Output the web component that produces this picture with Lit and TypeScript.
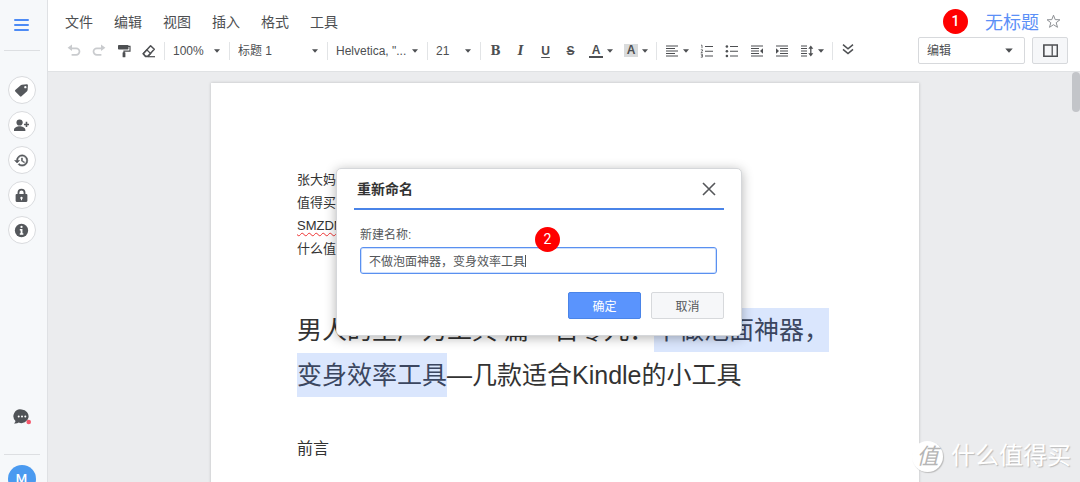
import { LitElement, html, css, svg } from "lit";
import { customElement, state } from "lit/decorators.js";

const icons = {
  undo: svg`<path d="M5 0.6V7L0.6 3.8z" fill="currentColor"/><path d="M4 3.9h5.2a3.2 3.2 0 0 1 0 6.6H4.6" transform="translate(0 .4)" fill="none" stroke="currentColor" stroke-width="1.7"/>`,
  redo: svg`<g transform="matrix(-1 0 0 1 14 0)"><path d="M5 0.6V7L0.6 3.8z" fill="currentColor"/><path d="M4 3.9h5.2a3.2 3.2 0 0 1 0 6.6H4.6" transform="translate(0 .4)" fill="none" stroke="currentColor" stroke-width="1.7"/></g>`,
  roller: svg`<rect x="1" y="1" width="10.5" height="4.6" rx=".8" fill="currentColor"/><path d="M11 2.4h2v4.8H7v2" fill="none" stroke="currentColor" stroke-width="1.2"/><rect x="5.6" y="8.2" width="2.8" height="5" rx=".5" fill="currentColor"/>`,
  eraser: svg`<path d="M8.6 1.7 12.3 5.2 5.8 12.2H3.6L1.2 9.8z" fill="none" stroke="currentColor" stroke-width="1.5" stroke-linejoin="round"/><path d="M4.7 5.8 8.7 9.6l-2.9 3H3.5L1.2 9.8z" fill="none" stroke="currentColor" stroke-width="1.2"/><path d="M6 12.7h7" stroke="currentColor" stroke-width="1.2"/>`,
  align: svg`<path d="M1 2h12M1 4.5h9M1 7h12M1 9.5h9M1 12h12" stroke="currentColor" stroke-width="1.1"/>`,
  ordered: svg`<path d="M5 2.5h8M5 7.2h8M5 12h8" stroke="currentColor" stroke-width="1.1"/><path d="M1 1.2h1v3M.8 5.8h1.7v1.2L.9 8.6h1.8M.8 10.2h1.6v3H.8M1.2 11.7h1.2" fill="none" stroke="currentColor" stroke-width=".8"/>`,
  bullets: svg`<path d="M5 2.5h8M5 7.2h8M5 12h8" stroke="currentColor" stroke-width="1.1"/><g fill="currentColor"><circle cx="1.9" cy="2.5" r="1.3"/><circle cx="1.9" cy="7.2" r="1.3"/><circle cx="1.9" cy="12" r="1.3"/></g>`,
  outdent: svg`<path d="M1 2h12M1 4.5h8M1 7h8M1 9.5h8M1 12h12" stroke="currentColor" stroke-width="1.2"/><path d="M13 4.2v5.6L10 7z" fill="currentColor"/>`,
  indent: svg`<path d="M1 2h12M5 4.5h8M5 7h8M5 9.5h8M1 12h12" stroke="currentColor" stroke-width="1.2"/><path d="M1 4.2v5.6L4 7z" fill="currentColor"/>`,
  spacing: svg`<path d="M1 2h6M1 4.5h6M1 7h6M1 9.5h6M1 12h6" stroke="currentColor" stroke-width="1.2"/><path d="M10.8 3v8" stroke="currentColor" stroke-width="1.3"/><path d="M8.3 4.7 10.8 1.5 13.3 4.7zM8.3 9.3 10.8 12.5 13.3 9.3z" fill="currentColor"/>`,
  more: svg`<path d="M2 .6 7 4.800l5-4.200M2 5.400 7 9.600l5-4.200" fill="none" stroke="currentColor" stroke-width="1.500"/>`,
  panel: svg`<path d="M.8 1.8h12.6v10.6H.8z" fill="none" stroke="currentColor" stroke-width="1.5"/><path d="M8.6 2v10" stroke="currentColor" stroke-width="1.2"/>`,
  tag: svg`<path fill-rule="evenodd" d="M7.3 1.6 12 1.2a1 1 0 0 1 1 1L12.7 6.6a1.5 1.5 0 0 1-.5 1L7 12.4a1 1 0 0 1-1.4 0L1.2 8a1 1 0 0 1 0-1.4L6.3 2a1.5 1.5 0 0 1 1-.4zM10.6 2.8a1.1 1.1 0 1 0 0 2.2 1.1 1.1 0 0 0 0-2.2z" fill="currentColor"/>`,
  person: svg`<circle cx="5.2" cy="4.2" r="2.9" fill="currentColor"/><path d="M0 12.2V11c0-2 3-3.2 5.2-3.2s5.4 1.2 5.4 3.2v1.2zM10.9 3.6h1.5v1.7H14v1.5h-1.6v1.7h-1.5V6.8H9.3V5.3h1.6z" fill="currentColor"/>`,
  history: svg`<path transform="scale(.5833)" fill="currentColor" stroke="currentColor" stroke-width=".9" d="M13 3a9 9 0 0 0-9 9H1l3.89 3.89.07.14L9 12H6c0-3.87 3.13-7 7-7s7 3.13 7 7-3.13 7-7 7c-1.93 0-3.68-.79-4.94-2.06l-1.42 1.42A8.95 8.95 0 0 0 13 21a9 9 0 0 0 0-18zm-1 5v5l4.28 2.54.72-1.21-3.5-2.08V8H12z"/>`,
  lock: svg`<path fill-rule="evenodd" d="M3.3 5.6V4.4a3.7 3.7 0 0 1 7.4 0v1.2h.8a1 1 0 0 1 1 1v5.4a1 1 0 0 1-1 1h-9a1 1 0 0 1-1-1V6.6a1 1 0 0 1 1-1zm1.7 0h4V4.4a2 2 0 0 0-4 0zm2 2.6a1.1 1.1 0 0 0-.5 2.1v1.2h1v-1.2A1.1 1.1 0 0 0 7 8.2z" fill="currentColor"/>`,
  info: svg`<circle cx="7" cy="7" r="6.2" fill="currentColor"/><circle cx="7" cy="3.7" r="1.05" fill="#fff"/><path d="M5.4 5.6h2.5v4h.8v1.3H5.4V9.6h.8V6.9h-.8z" fill="#fff"/>`,
};

const icon = (name: keyof typeof icons) =>
  html`<svg class="icon" viewBox="0 0 14 14" aria-hidden="true">${icons[name]}</svg>`;
const arrow = html`<svg class="arrow" viewBox="0 0 6 4" aria-hidden="true"><path d="M0 .3h6L3 3.7z" fill="currentColor"/></svg>`;

const shared = css`
  * { box-sizing: border-box; }
  button, select, input { font: inherit; color: inherit; margin: 0; }
  button { border: 0; padding: 0; background: none; cursor: pointer; }
  .icon { width: 14px; height: 14px; display: block; flex: none; }
  .arrow { width: 6px; height: 4px; display: block; flex: none; }
`;

@customElement("side-rail")
class SideRail extends LitElement {
  static styles = [shared, css`
    :host {
      display: flex; flex-direction: column; align-items: center;
      width: 48px; padding-right: 4px; background: #f6f8fa;
      border-right: 1px solid #dfe1e4; color: #55585c;
    }
    .menu { height: 50px; width: 100%; display: grid; place-items: center; color: #4d8bf5; }
    .menu svg { width: 15px; height: 12px; }
    .rule { width: 36px; height: 1px; background: #dddfe2; flex: none; }
    .tools { display: flex; flex-direction: column; gap: 7px; margin-top: 25px; }
    .round {
      width: 28px; height: 28px; border-radius: 50%; border: 1px solid #d9dbde;
      background: #fff; display: grid; place-items: center;
    }
    .round .icon { width: 15px; height: 15px; }
    .chat { margin-top: auto; margin-bottom: 28px; display: block; }
    .chat svg { display: block; width: 18px; height: 18px; }
    .account { height: 27px; padding-top: 10px; overflow: hidden; flex: none; }
    .avatar {
      width: 28px; height: 28px; border-radius: 50%; background: #4a9af0; color: #fff;
      font-size: 13px; font-weight: 500; line-height: 28px; font-family: "Roboto", sans-serif;
    }
  `];
  render() {
    const tools: [keyof typeof icons, string][] = [
      ["tag", "标签"], ["person", "共享"], ["history", "历史"], ["lock", "权限"], ["info", "信息"],
    ];
    return html`
      <button class="menu" aria-label="菜单">
        <svg viewBox="0 0 15 12"><path d="M1 1h13M1 6h13M1 11h13" stroke="currentColor" stroke-width="2" stroke-linecap="round"/></svg>
      </button>
      <div class="rule"></div>
      <div class="tools">
        ${tools.map(([n, label]) => html`<button class="round" aria-label=${label}>${icon(n)}</button>`)}
      </div>
      <button class="chat" aria-label="评论">
        <svg viewBox="0 0 18 18">
          <path d="M8.7 1.5a7.2 6.8 0 1 1-3 13.1C4.5 15.4 2.8 15.7 1 15.4c.9-.6 1.4-1.4 1.5-2.4A6.8 6.8 0 0 1 8.7 1.5z" fill="#505357"/>
          <g fill="#fff"><circle cx="5.7" cy="8.4" r="1"/><circle cx="9" cy="8.4" r="1"/><circle cx="12.3" cy="8.4" r="1"/></g>
          <circle cx="15.7" cy="14" r="2.3" fill="#f5566a"/>
        </svg>
      </button>
      <div class="rule"></div>
      <div class="account"><button class="avatar">M</button></div>
    `;
  }
}

@customElement("editor-header")
class EditorHeader extends LitElement {
  static styles = [shared, css`
    :host {
      display: flex; justify-content: space-between; background: #fff;
      padding: 8px 12px 7px 13px; color: #4d4f52; font-size: 12px;
    }
    .left, .right { display: flex; flex-direction: column; gap: 3px; }
    .menus { display: flex; gap: 21px; height: 26px; align-items: center; padding-left: 4px; font-size: 14px; }
    .bar { display: flex; height: 27px; align-items: center; }
    .tool { width: 25px; height: 26px; display: grid; place-items: center; }
    .tool:disabled { color: #c9cbce; }
    .split { height: 26px; padding: 0 5px 0 6px; display: flex; gap: 4px; align-items: center; }
    .sep { width: 1px; height: 18px; margin: 0 2px 0 3px; background: #e2e4e6; }
    .pick { display: flex; align-items: center; position: relative; height: 26px; }
    .pick select {
      appearance: none; border: 0; background: none; width: 100%; height: 100%;
      padding: 0 14px 0 6px; outline: 0;
    }
    .pick .arrow { position: absolute; right: 6px; pointer-events: none; }
    .zoom { width: 59px; }
    .style { width: 92px; }
    .face { width: 94px; }
    .size { width: 47px; }
    .slab { font: bold 12px/14px "DejaVu Serif", serif; }
    .italic { font-style: italic; }
    .grotesk { font: bold 12px/14px "Liberation Sans", sans-serif; }
    .under { text-decoration: underline; text-underline-offset: 2px; }
    .strike { text-decoration: line-through; }
    .ink { width: 14px; border-bottom: 2px solid #4d4f52; text-align: center; line-height: 12px; }
    .fill { width: 14px; height: 13px; background: #d9dbdc; text-align: center; line-height: 13px; }
    .title { display: flex; height: 26px; align-items: center; justify-content: flex-end; gap: 7px; padding-right: 7px; }
    .badge {
      width: 25px; height: 25px; border-radius: 50%; background: #f00; color: #fff; margin-right: 10px;
      font: 500 14px/25px "Roboto", sans-serif; text-align: center;
    }
    .name { font-size: 18px; color: #5b90f7; text-decoration: none; }
    .star svg { width: 15px; height: 15px; display: block; }
    .modes { display: flex; gap: 7px; }
    .mode { width: 107px; height: 27px; border: 1px solid #d7d9dc; border-radius: 2px; }
    .mode select { padding-left: 8px; }
    .mode .arrow { right: 11px; width: 8px; height: 5px; }
    .side { width: 36px; height: 27px; border: 1px solid #d7d9dc; border-radius: 2px; background: #f6f7f9; display: grid; place-items: center; }
    .side .icon { width: 15px; height: 15px; }
  `];
  private pick(cls: string, label: string, value: string) {
    return html`<span class="pick ${cls}"><select aria-label=${label}><option>${value}</option></select>${arrow}</span>`;
  }
  private tool(name: keyof typeof icons, label: string, off = false) {
    return html`<button class="tool" aria-label=${label} ?disabled=${off}>${icon(name)}</button>`;
  }
  render() {
    const sep = html`<span class="sep"></span>`;
    return html`
      <div class="left">
        <nav class="menus">${["文件", "编辑", "视图", "插入", "格式", "工具"].map((m) => html`<button>${m}</button>`)}</nav>
        <div class="bar" role="toolbar">
          ${this.tool("undo", "撤销", true)}${this.tool("redo", "重做", true)}
          ${this.tool("roller", "格式刷")}${this.tool("eraser", "清除格式")}
          ${sep}${this.pick("zoom", "缩放", "100%")}
          ${sep}${this.pick("style", "样式", "标题 1")}
          ${sep}${this.pick("face", "字体", 'Helvetica, "...')}
          ${sep}${this.pick("size", "字号", "21")}
          ${sep}
          <button class="tool"><span class="slab">B</span></button>
          <button class="tool"><span class="slab italic">I</span></button>
          <button class="tool"><span class="grotesk under">U</span></button>
          <button class="tool"><span class="grotesk strike">S</span></button>
          <button class="split"><span class="grotesk ink">A</span>${arrow}</button>
          <button class="split"><span class="grotesk fill">A</span>${arrow}</button>
          ${sep}
          <button class="split" aria-label="对齐">${icon("align")}${arrow}</button>
          ${this.tool("ordered", "编号")}${this.tool("bullets", "项目符号")}
          ${this.tool("outdent", "减少缩进")}${this.tool("indent", "增加缩进")}
          <button class="split" aria-label="行距">${icon("spacing")}${arrow}</button>
          ${sep}${this.tool("more", "更多")}
        </div>
      </div>
      <div class="right">
        <div class="title">
          <span class="badge">1</span>
          <a class="name" href="#">无标题</a>
          <button class="star" aria-label="收藏">
            <svg viewBox="0 0 15 15"><path d="M7.5 1.2l1.7 4.4 4.7.2-3.7 2.9 1.3 4.6-4-2.6-4 2.6 1.3-4.6L1.1 5.8l4.7-.2z" fill="none" stroke="#8d9094"/></svg>
          </button>
        </div>
        <div class="modes">
          ${this.pick("mode", "模式", "编辑")}
          <button class="side" aria-label="侧栏">${icon("panel")}</button>
        </div>
      </div>
    `;
  }
}

@customElement("rename-dialog")
class RenameDialog extends LitElement {
  @state() private value = "不做泡面神器，变身效率工具";
  static styles = [shared, css`
    :host {
      position: absolute; inset: 0; padding: 168px 2px 0 0;
      display: flex; justify-content: center; align-items: flex-start;
    }
    .dialog {
      width: 406px; padding: 0 17px 16px; background: #fff; border: 1px solid #d5d7da;
      border-radius: 5px; box-shadow: 0 2px 12px rgba(0, 0, 0, 0.3); color: #55575a; font-size: 12px;
    }
    .head {
      display: flex; justify-content: space-between; align-items: center; height: 41px;
      padding: 0 8px 0 3px; border-bottom: 2px solid #4a84e8;
    }
    .head h2 { margin: 0; font-size: 14px; line-height: 20px; color: #333; }
    .form { padding: 16px 7px 0 6px; }
    .form label { display: block; line-height: 18px; margin-bottom: 3px; }
    .field { position: relative; }
    .field input {
      display: block; width: 100%; height: 27px; padding: 0 8px; outline: 0;
      border: 1px solid #5a90f0; border-radius: 3px; box-shadow: inset 0 0 0 1px #cfe0fc;
    }
    .caret { position: absolute; left: 165px; top: 8px; width: 1px; height: 12px; background: #555; }
    .badge {
      position: absolute; left: 175px; top: -20px; width: 25px; height: 25px; border-radius: 50%;
      background: #f00; color: #fff; font: 14px/25px "Roboto", sans-serif; text-align: center;
    }
    .actions { display: flex; justify-content: flex-end; gap: 10px; margin-top: 18px; }
    .actions button { width: 73px; height: 27px; border: 1px solid #d7d9dc; border-radius: 2px; background: #f6f7f9; }
    .actions .ok { background: #5a94fd; border-color: #4a84e8; color: #fff; }
  `];
  render() {
    return html`
      <div class="dialog" role="dialog" aria-labelledby="t">
        <div class="head">
          <h2 id="t">重新命名</h2>
          <button aria-label="关闭"><svg class="icon" viewBox="0 0 14 14"><path d="M1 1l12 12M13 1 1 13" stroke="#55575a" stroke-width="1.6"/></svg></button>
        </div>
        <div class="form">
          <label for="name">新建名称:</label>
          <div class="field">
            <input id="name" .value=${this.value} @input=${(e: Event) => (this.value = (e.target as HTMLInputElement).value)}>
            <span class="caret"></span>
            <span class="badge">2</span>
          </div>
        </div>
        <div class="actions"><button class="ok">确定</button><button>取消</button></div>
      </div>
    `;
  }
}

@customElement("app-root")
class AppRoot extends LitElement {
  static styles = [shared, css`
    :host {
      display: flex; height: 100vh; position: relative; overflow: hidden;
      font-family: "Liberation Sans", "Noto Sans CJK SC", sans-serif;
    }
    .main { flex: 1; min-width: 0; display: flex; flex-direction: column; }
    .canvas {
      flex: 1; min-height: 0; overflow: hidden; position: relative; background: #ebecee;
      border-top: 1px solid #e0e2e4; padding: 11px 0 0 2px;
    }
    .thumb { position: absolute; right: 0; top: 0; width: 8px; height: 40px; border-radius: 4px; background: #c3c5c9; }
    .page {
      max-width: 708px; min-height: 100%; margin: 0 auto; padding: 85px 86px; background: #fff;
      box-shadow: 0 0 3px rgba(0, 0, 0, 0.2); color: #333;
    }
    .page p { margin: 0; font-size: 13px; line-height: 23px; }
    .typo { text-decoration: underline wavy #e33 1px; text-underline-offset: 2px; }
    .page h1 { margin: 48px 0 39px; font-size: 25px; line-height: 45px; font-weight: 400; }
    .page h2 { margin: 0; font-size: 16px; line-height: 24px; font-weight: 400; }
    mark { background: #dae6fd; color: #3b4660; padding: 8px 0; -webkit-box-decoration-break: clone; box-decoration-break: clone; }
    .brand {
      position: absolute; right: 9px; bottom: 8px; display: flex; align-items: center; gap: 8px;
      color: #fff; font-size: 24px; line-height: 36px; text-shadow: 1px 1px 1px #bbb;
    }
    .seal {
      width: 31px; height: 31px; border-radius: 50%; background: #fff; color: #b5b5b5; text-shadow: none;
      font-size: 22px; line-height: 31px; text-align: center; font-style: italic; box-shadow: 1px 1px 1px #bbb;
    }
  `];
  render() {
    return html`
      <side-rail></side-rail>
      <div class="main">
        <editor-header></editor-header>
        <div class="canvas">
          <article class="page">
            <p>张大妈</p>
            <p>值得买</p>
            <p><span class="typo">SMZDM</span></p>
            <p>什么值得买</p>
            <h1>男人的生产力工具 篇一百零九：<mark>不做泡面神器，变身效率工具</mark>—几款适合Kindle的小工具</h1>
            <h2>前言</h2>
          </article>
          <div class="thumb"></div>
        </div>
      </div>
      <rename-dialog></rename-dialog>
      <div class="brand"><span class="seal">值</span>什么值得买</div>
    `;
  }
}
